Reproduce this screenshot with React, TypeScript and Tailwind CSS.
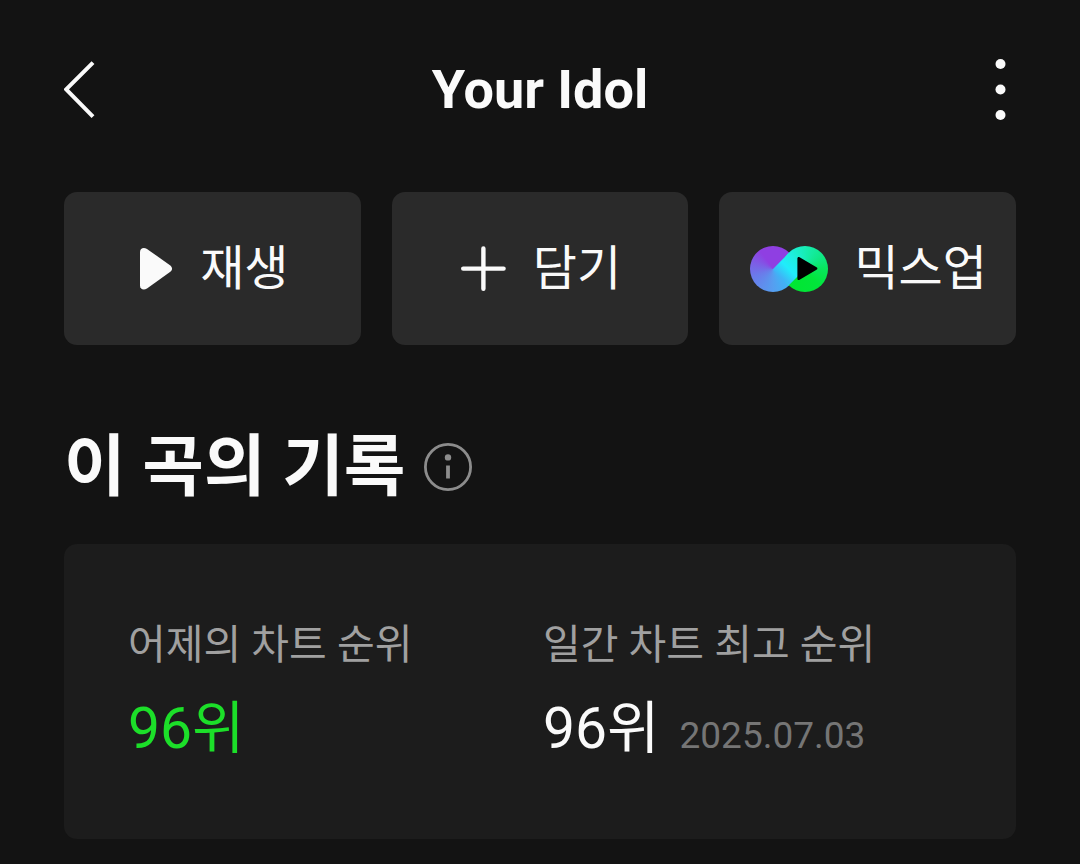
import type { ReactNode } from "react";

type Record = {
  label: string;
  rank: string;
  date?: string;
  highlight?: boolean;
};

const RECORDS: Record[] = [
  { label: "어제의 차트 순위", rank: "96위", highlight: true },
  { label: "일간 차트 최고 순위", rank: "96위", date: "2025.07.03" },
];

function BackIcon() {
  return (
    <svg width="32" height="60" viewBox="0 0 32 60" fill="none" aria-hidden="true">
      <path d="M29 2.6 2.2 29.4 29 56.6" stroke="#fafafa" strokeWidth="4" />
    </svg>
  );
}

function MoreIcon() {
  return (
    <svg width="32" height="64" viewBox="0 0 32 64" fill="#fafafa" aria-hidden="true">
      <circle cx="16.5" cy="6" r="5" />
      <circle cx="16.5" cy="31.5" r="5" />
      <circle cx="16.5" cy="57" r="5" />
    </svg>
  );
}

function PlayIcon() {
  return (
    <svg width="36" height="44" viewBox="-2 0 36 44" fill="#fafafa" aria-hidden="true">
      <path d="M0 4.9C0 1 3.8-.2 7 1.9L30 18.3c2.7 2 2.7 4.8 0 6.8L7 41.5c-3.2 2.1-7 .9-7-3Z" />
    </svg>
  );
}

function PlusIcon() {
  return (
    <svg width="46" height="46" viewBox="0 0 46 46" fill="none" aria-hidden="true">
      <path d="M22.4 2.4v40.4M2.2 22.6h40.4" stroke="#fafafa" strokeWidth="4.4" strokeLinecap="round" />
    </svg>
  );
}

// two conic discs joined by a square band that is tangent to both
function MixUpIcon() {
  return (
    <span className="relative block h-[46px] w-[78px] shrink-0">
      <span className="absolute left-0 top-0 size-[46px] rounded-full bg-[conic-gradient(#8f3fe2_0deg,#8f3fe2_45deg,#3fb4f6_46deg,#3fb4f6_135deg,#569ef0_180deg,#6b7aea_250deg,#7e5ce6_290deg,#8f3fe2_325deg)]" />
      <span className="absolute right-0 top-0 size-[46px] rounded-full bg-[conic-gradient(#17edb4_0deg,#10e888_50deg,#08e65c_90deg,#02e63a_140deg,#00e632_225deg,#1eeee0_226deg,#1eeee0_315deg,#17edb4_360deg)]" />
      <svg className="absolute inset-0" width="78" height="46" viewBox="0 0 78 46" aria-hidden="true">
        <defs>
          <linearGradient id="band" gradientUnits="userSpaceOnUse" x1="31" y1="31" x2="47" y2="15">
            <stop offset="0" stopColor="#3fb4f6" />
            <stop offset="0.5" stopColor="#20ecfb" />
            <stop offset="1" stopColor="#1eeee0" />
          </linearGradient>
        </defs>
        <path d="M23 23 38.9 6.9 55 23 39.1 39.1Z" fill="url(#band)" />
        <path d="M47.4 12.6c0-1.4 1-2 2.2-1.3l16.9 9.9c1.2.7 1.2 1.9 0 2.6l-16.9 9.9c-1.2.7-2.2.1-2.2-1.3Z" fill="#000" />
      </svg>
    </span>
  );
}

function ActionButton({ icon, label }: { icon: ReactNode; label: string }) {
  return (
    <button
      type="button"
      className="flex h-[153px] items-center justify-center gap-[26px] rounded-[13px] bg-[#2a2a2a] pl-0.5 text-5xl text-[#fafafa]"
    >
      {icon}
      <span>{label}</span>
    </button>
  );
}

export default function App() {
  return (
    <main className="min-h-screen bg-[#131313] px-16 pb-6 pt-12 font-['Roboto','Noto_Sans_CJK_KR',sans-serif] text-[#fafafa]">
      <header className="flex h-[84px] items-center justify-between">
        <button type="button" aria-label="뒤로">
          <BackIcon />
        </button>
        <h1 className="text-[54px] font-bold leading-none">Your Idol</h1>
        <button type="button" aria-label="더보기">
          <MoreIcon />
        </button>
      </header>

      <div className="mt-[60px] grid grid-cols-3 gap-[31px]">
        <ActionButton icon={<PlayIcon />} label="재생" />
        <ActionButton icon={<PlusIcon />} label="담기" />
        <ActionButton icon={<MixUpIcon />} label="믹스업" />
      </div>

      <section className="mt-[82px]">
        <div className="flex items-center gap-[18px]">
          <h2 className="text-[67px] font-bold leading-[80px]">이 곡의 기록</h2>
          <button type="button" aria-label="정보">
            <svg width="48" height="48" viewBox="0 0 48 48" aria-hidden="true">
              <circle cx="24" cy="24" r="22.6" fill="none" stroke="#8c8c8c" strokeWidth="2.8" />
              <circle cx="24" cy="14.4" r="3.2" fill="#8c8c8c" />
              <path d="M22.1 22.5h3.8v13h-3.8z" fill="#8c8c8c" />
            </svg>
          </button>
        </div>

        <dl className="mt-[37px] grid h-[295px] grid-cols-2 content-start rounded-[13px] bg-[#1c1c1c] pl-16 pr-[58px] pt-[71px]">
          {RECORDS.map((r) => (
            <div key={r.label}>
              <dt className="text-[41px] leading-[60px] text-[#a0a0a0]">{r.label}</dt>
              <dd className="mt-3 flex items-baseline gap-5 leading-[84px]">
                <span className={r.highlight ? "text-[57px] text-[#1cdf29]" : "text-[57px]"}>{r.rank}</span>
                {r.date && <time className="text-[37px] text-[#757575]">{r.date}</time>}
              </dd>
            </div>
          ))}
        </dl>
      </section>
    </main>
  );
}
